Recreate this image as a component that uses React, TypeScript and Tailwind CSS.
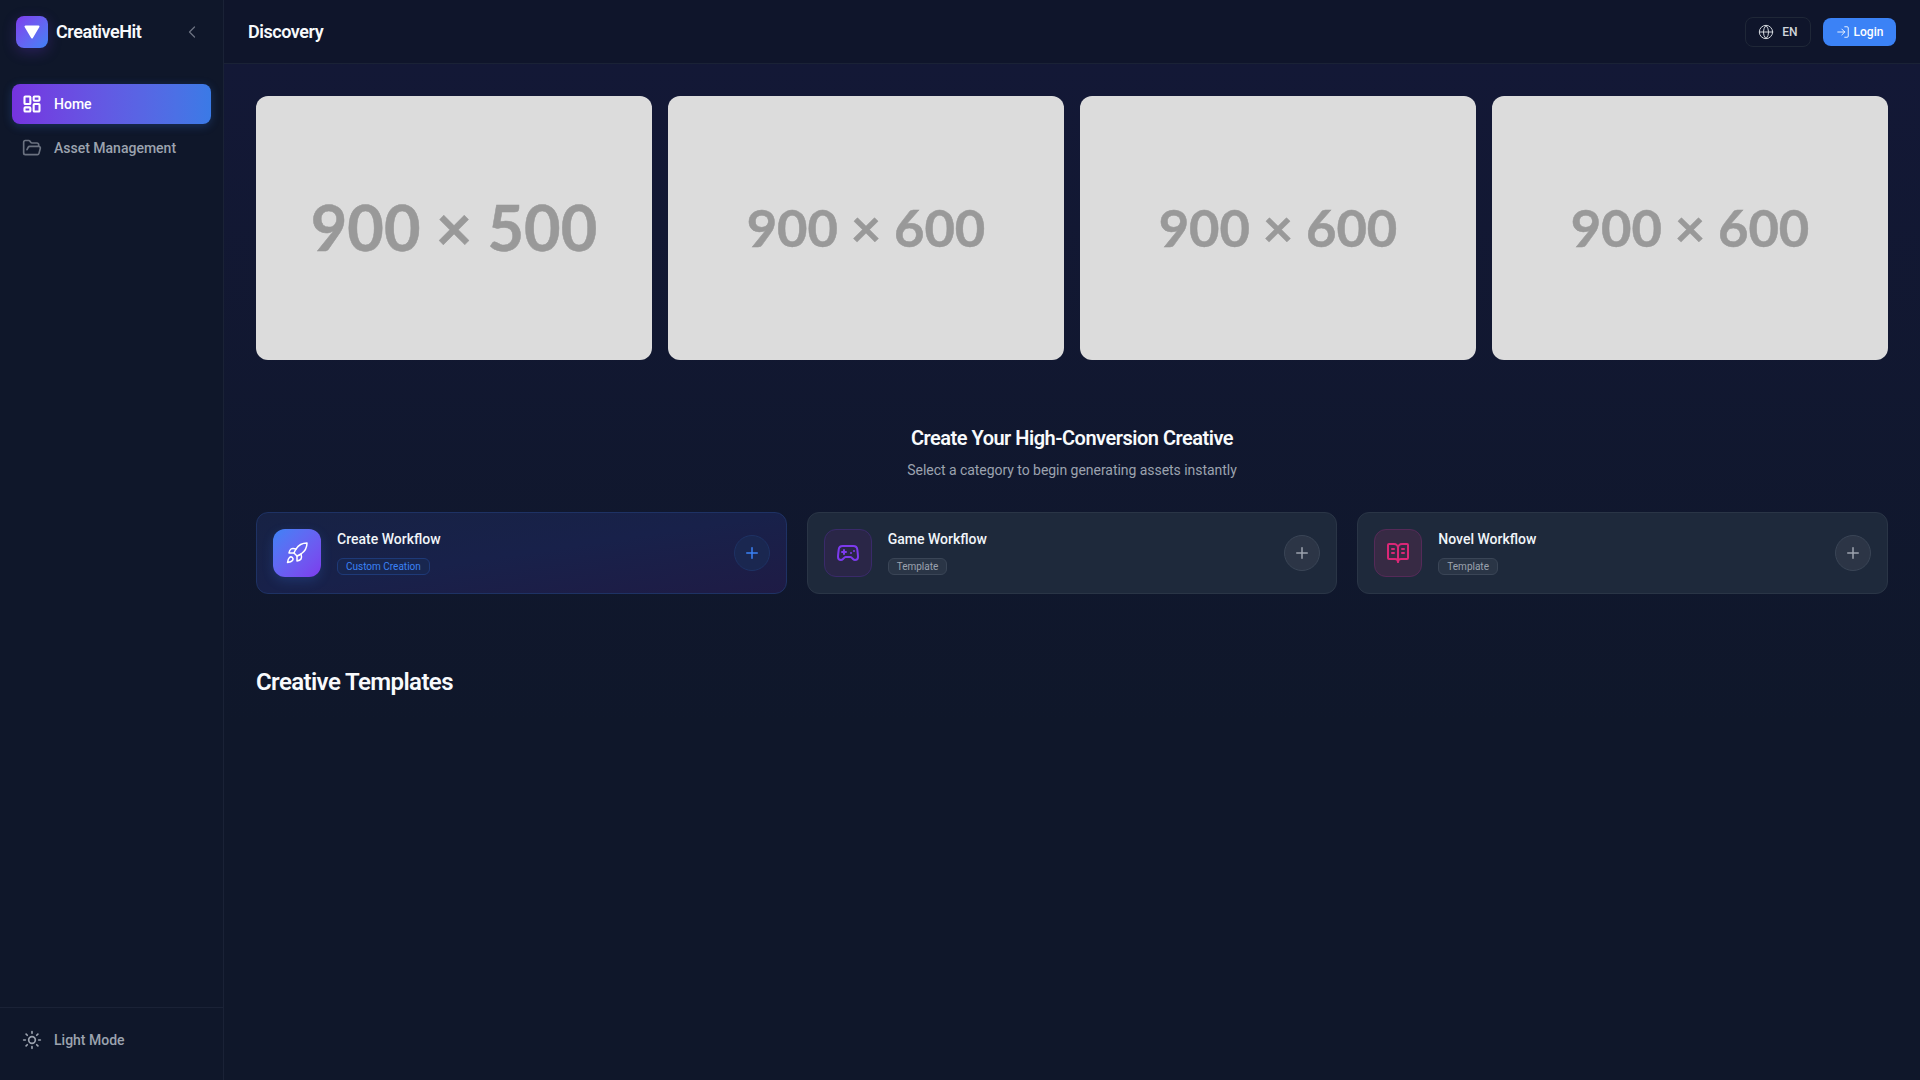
import { BookOpenText, ChevronLeft, FolderOpen, Gamepad2, Globe, LayoutDashboard, LogIn, Plus, Rocket, Sun } from "lucide-react";

const banners = [
  { label: "900 × 500", size: "text-[63px]" },
  { label: "900 × 600", size: "text-[52.5px]" },
  { label: "900 × 600", size: "text-[52.5px]" },
  { label: "900 × 600", size: "text-[52.5px]" },
];

function Sidebar() {
  return (
    <aside className="w-[224px] shrink-0 h-screen flex flex-col bg-[#0f172a] border-r border-[#1a2236]">
      <div className="h-[64px] flex items-center justify-between pl-4 pr-[21px]">
        <div className="flex items-center gap-2">
          <div className="w-8 h-8 rounded-lg bg-gradient-to-br from-[#7c3aed] to-[#3b82f6] flex items-center justify-center shadow-[0_4px_14px_rgba(124,58,237,0.25)]">
            <svg width="16" height="14" viewBox="0 0 16 14">
              <path d="M1.5 1.5 H14.5 L8 12.5 Z" fill="#fff" stroke="#fff" strokeWidth="2" strokeLinejoin="round" />
            </svg>
          </div>
          <span className="text-lg font-semibold text-[#f8fafc] tracking-tight">CreativeHit</span>
        </div>
        <ChevronLeft size={20} strokeWidth={1.5} className="text-[#6b7280]" />
      </div>
      <nav className="flex flex-col gap-1 px-3 pt-5 flex-1">
        <div className="h-10 rounded-lg flex items-center gap-3 px-[10px] bg-gradient-to-r from-[#7533e0] to-[#3a7ae6] text-white text-sm font-medium shadow-[0_2px_10px_rgba(59,130,246,0.25)]">
          <LayoutDashboard size={20} strokeWidth={2.5} />
          <span>Home</span>
        </div>
        <div className="h-10 rounded-lg flex items-center gap-3 px-[10px] text-[#9ca3af] text-sm font-medium">
          <FolderOpen size={20} className="text-[#6b7280]" />
          <span>Asset Management</span>
        </div>
      </nav>
      <div className="h-[73px] pb-2 border-t border-[#1a2236] flex items-center gap-3 px-[22px] text-sm font-medium text-[#9ca3af]">
        <Sun size={20} />
        <span>Light Mode</span>
      </div>
    </aside>
  );
}

function Header() {
  return (
    <header className="h-[64px] shrink-0 flex items-center justify-between pl-6 pr-6 border-b border-[#1a2236] bg-[#0f152b]">
      <h1 className="text-lg font-semibold text-[#f8fafc] tracking-tight">Discovery</h1>
      <div className="flex items-center gap-3">
        <button className="h-[30px] w-[66px] rounded-lg border border-[#1f2737] flex items-center justify-center gap-2 text-xs font-medium text-[#d1d5db]">
          <Globe size={16} strokeWidth={1.5} />
          <span>EN</span>
        </button>
        <button className="h-7 w-[73px] rounded-lg bg-[#3b82f6] flex items-center justify-center gap-1 text-xs font-medium text-white">
          <LogIn size={14} strokeWidth={1.5} />
          <span>Login</span>
        </button>
      </div>
    </header>
  );
}

function WorkflowCard({ title, tag, icon, primary, iconBox }: { title: string; tag: string; icon: React.ReactNode; primary?: boolean; iconBox: string }) {
  return (
    <div className={`h-[82px] rounded-xl border p-4 flex items-center gap-4 ${primary ? "border-[#1e3264] bg-gradient-to-br from-[#172244] via-[#18214a] to-[#1e1b45]" : "border-[#2a3546] bg-[#1e293b]"}`}>
      <div className={`w-12 h-12 shrink-0 rounded-xl flex items-center justify-center ${iconBox}`}>{icon}</div>
      <div className="flex-1 min-w-0 pb-[2px] flex flex-col items-start gap-[9px]">
        <p className="text-sm font-medium leading-[20px] text-[#f1f5f9]">{title}</p>
        <span className={`h-[17px] px-2 flex items-center rounded-md border text-[10px] ${primary ? "border-[#1e3a78] bg-[#18264f] text-[#3b82f6]" : "border-[#3a4556] bg-[#2a3546] text-[#9ca3af]"}`}>{tag}</span>
      </div>
      <div className={`w-9 h-9 shrink-0 rounded-full border flex items-center justify-center ${primary ? "border-[#1e3264] bg-[#1a2750] text-[#3b82f6]" : "border-[#3a4556] bg-[#2c3546] text-[#9ca3af]"}`}>
        <Plus size={18} />
      </div>
    </div>
  );
}

export default function App() {
  return (
    <div className="flex h-screen overflow-hidden bg-[#0f172a] font-['Roboto',sans-serif]">
      <Sidebar />
      <div className="flex-1 min-w-0 flex flex-col">
        <Header />
        <main className="flex-1 px-8 pt-8 bg-gradient-to-b from-[#131836] from-0% to-[#0f172a] to-65%">
          <div className="grid grid-cols-4 gap-4">
            {banners.map((b, i) => (
              <div key={i} className="h-[264px] rounded-xl bg-[#dcdcdc] flex items-center justify-center pb-[2px]">
                <span className={`font-['Lato',sans-serif] font-bold text-[#999999] [-webkit-text-stroke:0.5px_#999999] ${b.size}`}>{b.label}</span>
              </div>
            ))}
          </div>
          <div className="mt-[64px] text-center">
            <h2 className="text-xl font-semibold leading-7 text-[#f8fafc] tracking-tight">Create Your High-Conversion Creative</h2>
            <p className="mt-2 text-sm leading-5 text-[#9ca3af] tracking-[-0.04px]">Select a category to begin generating assets instantly</p>
          </div>
          <div className="mt-[32px] grid grid-cols-3 gap-5">
            <WorkflowCard primary title="Create Workflow" tag="Custom Creation" iconBox="bg-gradient-to-br from-[#3b82f6] to-[#7c3aed] shadow-[0_4px_12px_rgba(59,130,246,0.2)]" icon={<Rocket size={24} strokeWidth={1.5} className="text-white" />} />
            <WorkflowCard title="Game Workflow" tag="Template" iconBox="bg-[#2a2647] border border-[#3a2a6a]" icon={<Gamepad2 size={24} strokeWidth={2} className="text-[#7c3aed]" />} />
            <WorkflowCard title="Novel Workflow" tag="Template" iconBox="bg-[#372a44] border border-[#552a58]" icon={<BookOpenText size={24} strokeWidth={2} className="text-[#db2777]" />} />
          </div>
          <h2 className="mt-[72px] text-2xl font-semibold leading-8 text-[#f8fafc] tracking-tight">Creative Templates</h2>
        </main>
      </div>
    </div>
  );
}
